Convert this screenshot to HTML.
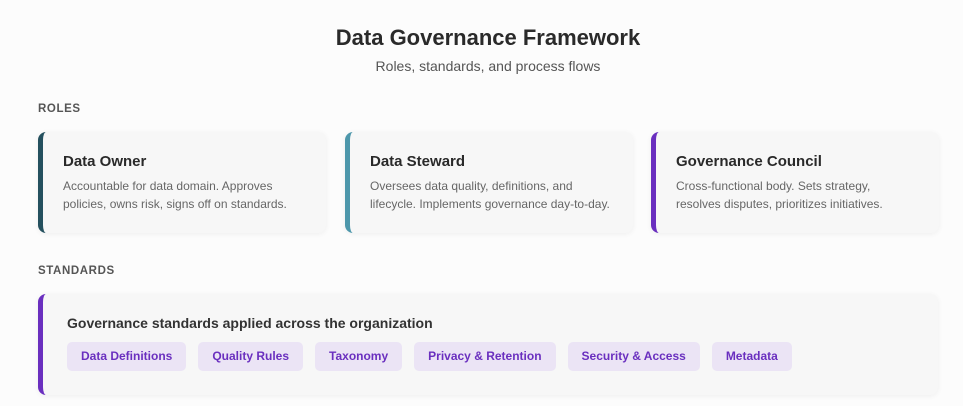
<!DOCTYPE html>
<html><head><style>
*{margin:0;padding:0;box-sizing:border-box}
body{width:963px;height:406px;background:#fcfcfc;font-family:"Liberation Sans",sans-serif;color:#333;position:relative;overflow:hidden}
h1{position:absolute;top:25px;left:0;width:976px;text-align:center;font-size:22px;font-weight:700;color:#2a2a2a}
.sub{position:absolute;top:58px;left:0;width:976px;text-align:center;font-size:14px;color:#555}
.lab{position:absolute;left:38px;font-size:11.5px;font-weight:700;color:#555;letter-spacing:.6px}
.card{position:absolute;top:132px;width:288px;height:101px;background:#f7f7f7;border-radius:8px;border-left:5px solid;box-shadow:0 1px 6px rgba(0,0,0,.06);padding:21px 0 0 20px}
.card h3{font-size:15px;font-weight:700;color:#2a2a2a;margin-bottom:7px}
.card p{font-size:12px;line-height:18px;color:#666}
.std{position:absolute;left:38px;top:294px;width:900px;height:101px;background:#f7f7f7;border-radius:8px;border-left:5px solid #6a2fbf;box-shadow:0 1px 6px rgba(0,0,0,.06);padding:21px 0 0 24px}
.std h3{font-size:14px;font-weight:700;color:#333;margin-bottom:11px}
.tag{display:inline-block;height:29px;line-height:29px;padding:0 14px;background:#ebe4f5;color:#6a2fbf;font-size:12px;font-weight:700;border-radius:5px;margin-right:12px}
</style></head><body>
<h1>Data Governance Framework</h1>
<div class="sub">Roles, standards, and process flows</div>
<div class="lab" style="top:103px">ROLES</div>
<div class="card" style="left:38px;border-color:#24505e"><h3>Data Owner</h3><p>Accountable for data domain. Approves<br>policies, owns risk, signs off on standards.</p></div>
<div class="card" style="left:345px;border-color:#4d97ab"><h3>Data Steward</h3><p>Oversees data quality, definitions, and<br>lifecycle. Implements governance day-to-day.</p></div>
<div class="card" style="left:651px;border-color:#6a2fbf"><h3>Governance Council</h3><p>Cross-functional body. Sets strategy,<br>resolves disputes, prioritizes initiatives.</p></div>
<div class="lab" style="top:265px">STANDARDS</div>
<div class="std"><h3>Governance standards applied across the organization</h3>
<span class="tag">Data Definitions</span><span class="tag">Quality Rules</span><span class="tag">Taxonomy</span><span class="tag">Privacy &amp; Retention</span><span class="tag">Security &amp; Access</span><span class="tag">Metadata</span></div>
</body></html>
